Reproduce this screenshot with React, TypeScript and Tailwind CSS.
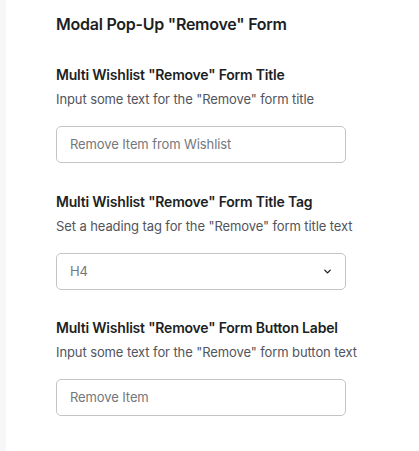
import { ChevronDown } from 'lucide-react'

const fields = [
  {
    label: 'Multi Wishlist "Remove" Form Title',
    help: 'Input some text for the "Remove" form title',
    value: 'Remove Item from Wishlist',
    kind: 'text',
  },
  {
    label: 'Multi Wishlist "Remove" Form Title Tag',
    help: 'Set a heading tag for the "Remove" form title text',
    value: 'H4',
    kind: 'select',
  },
  {
    label: 'Multi Wishlist "Remove" Form Button Label',
    help: 'Input some text for the "Remove" form button text',
    value: 'Remove Item',
    kind: 'text',
  },
]

export default function App() {
  return (
    <div className="flex min-h-[451px] w-[419px] bg-white font-['Inter',sans-serif] text-[#1d1f23]">
      <div className="w-[6px] shrink-0 bg-[#f5f7f9]" />
      <div className="flex-1 pl-[50px] pt-[12px]">
        <h2 className="text-[16px] leading-6 font-semibold tracking-[-0.25px]">Modal Pop-Up "Remove" Form</h2>

        {fields.map((f, i) => (
          <div key={i} className={i === 2 ? 'mt-[28px]' : 'mt-[29px]'}>
            <div className="text-[14px] leading-5 font-semibold tracking-[-0.2px]">{f.label}</div>
            <div className="mt-1 text-[13px] leading-5 text-[#52545c] tracking-[-0.1px]">{f.help}</div>
            <div className="mt-[17px] flex h-[37px] w-[290px] items-center justify-between rounded-[5px] border border-[#c3c4c7] pl-[13px] pr-[12px]">
              <span className="text-[13px] text-[#74777c] tracking-[-0.1px]">{f.value}</span>
              {f.kind === 'select' && <ChevronDown size={11} strokeWidth={3} className="text-[#1d1f23]" />}
            </div>
          </div>
        ))}
      </div>
    </div>
  )
}
